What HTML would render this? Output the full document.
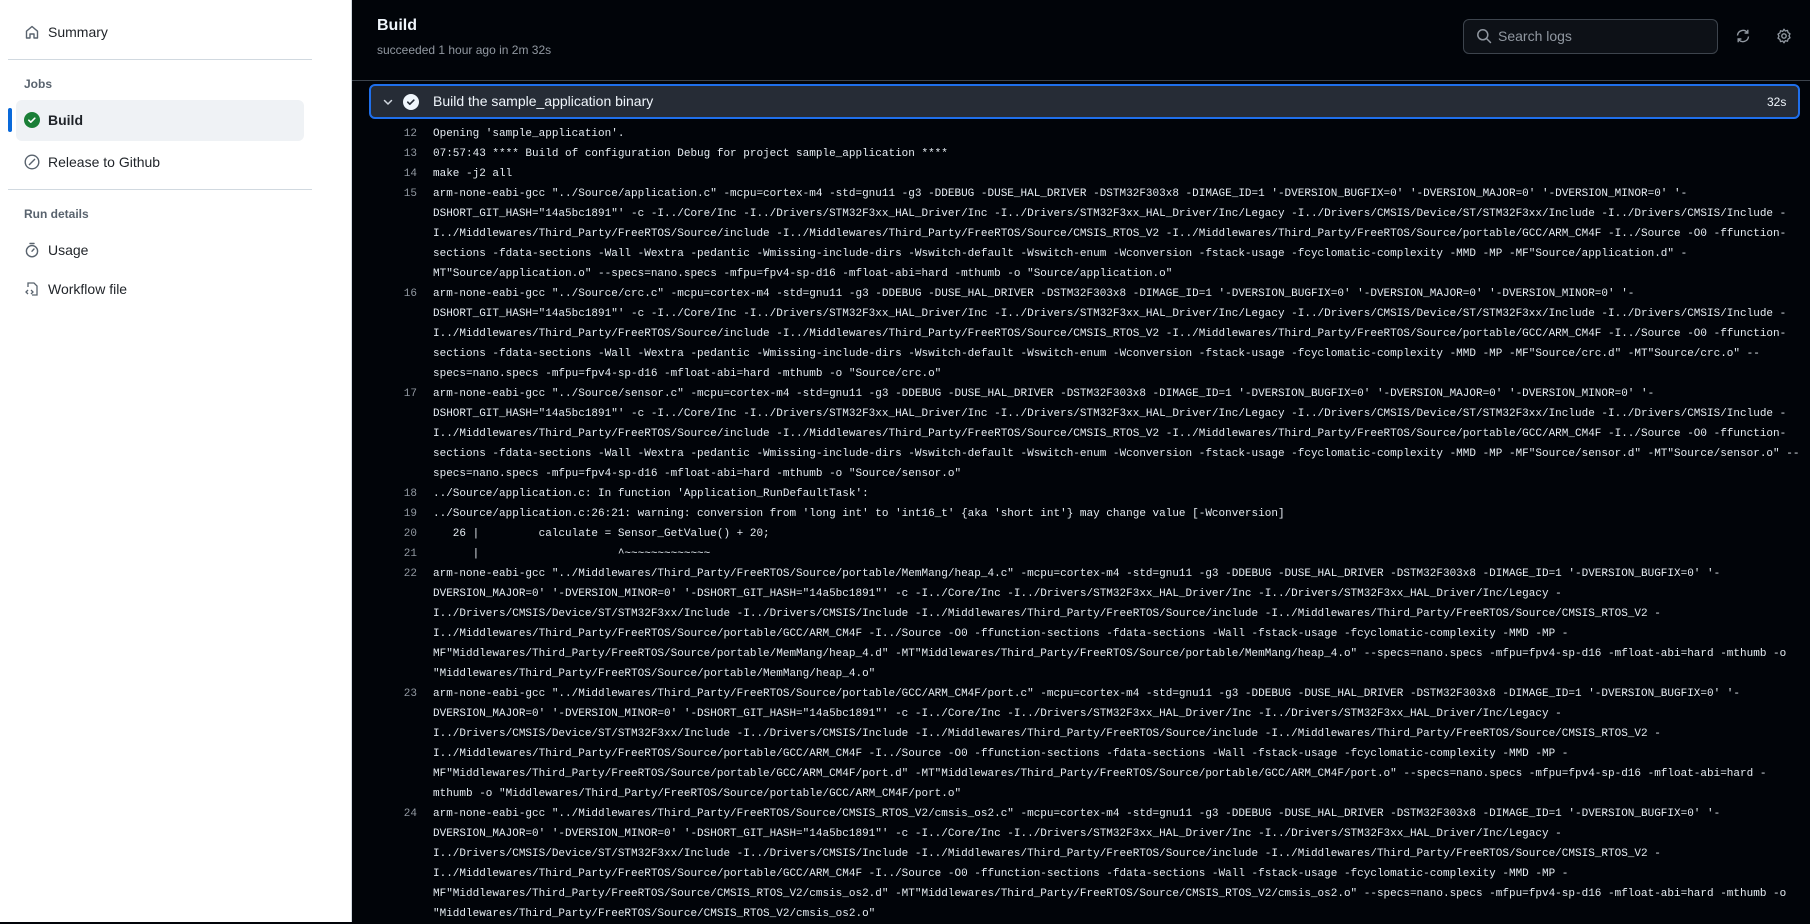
<!DOCTYPE html>
<html><head><meta charset="utf-8"><style>
*{box-sizing:border-box;margin:0;padding:0}
html,body{width:1810px;height:922px;overflow:hidden;background:#010409;font-family:"Liberation Sans",sans-serif}
#side{position:absolute;left:0;top:0;width:352px;height:922px;background:#fff;border-right:1px solid #d1d9e0}
.it{position:absolute;left:48px;font-size:14px;color:#1f2328;line-height:20px}
.ic{position:absolute;left:24px}
.sep{position:absolute;left:8px;width:304px;height:1px;background:#d1d9e0}
.hd{position:absolute;left:24px;font-size:12px;color:#59636e;font-weight:bold}
#main{position:absolute;left:352px;top:0;right:0;bottom:0}
.log{position:absolute;left:0;top:124px;width:1458px;font-family:"Liberation Mono",monospace;font-size:11px;line-height:20px;color:#e6edf3}
.r{white-space:pre;height:20px;position:relative;padding-left:81px}
.n{position:absolute;left:25px;width:40px;text-align:right;color:#9198a1}
</style></head><body>
<div id="side">
 <svg class="ic" style="top:24px" width="16" height="16" viewBox="0 0 16 16"><path d="M2.5 7.2 8 2.5l5.5 4.7V14H10V10H6v4H2.5z" fill="none" stroke="#59636e" stroke-width="1.4" stroke-linejoin="round"/></svg>
 <div class="it" style="top:22px">Summary</div>
 <div class="sep" style="top:59px"></div>
 <div class="hd" style="top:77px">Jobs</div>
 <div style="position:absolute;left:16px;top:100px;width:288px;height:41px;background:#eff2f5;border-radius:6px"></div>
 <div style="position:absolute;left:8px;top:108px;width:4px;height:24px;background:#0969da;border-radius:2px"></div>
 <svg class="ic" style="top:112px" width="16" height="16" viewBox="0 0 16 16"><circle cx="8" cy="8" r="8" fill="#1a7f37"/><path d="M4.8 8.2l2 2 4-4" fill="none" stroke="#fff" stroke-width="1.6" stroke-linecap="round" stroke-linejoin="round"/></svg>
 <div class="it" style="top:110px;font-weight:bold">Build</div>
 <svg class="ic" style="top:154px" width="16" height="16" viewBox="0 0 16 16"><circle cx="8" cy="8" r="6.8" fill="none" stroke="#59636e" stroke-width="1.4"/><path d="M5 11l6-6" stroke="#59636e" stroke-width="1.4"/></svg>
 <div class="it" style="top:152px">Release to Github</div>
 <div class="sep" style="top:189px"></div>
 <div class="hd" style="top:207px">Run details</div>
 <svg class="ic" style="top:242px" width="16" height="16" viewBox="0 0 16 16"><circle cx="8" cy="9.2" r="5.6" fill="none" stroke="#59636e" stroke-width="1.4"/><path d="M6 1.5h4M8 9.2 10 7" stroke="#59636e" stroke-width="1.4" stroke-linecap="round"/></svg>
 <div class="it" style="top:240px">Usage</div>
 <svg class="ic" style="top:281px" width="16" height="16" viewBox="0 0 16 16"><path d="M4 6V2h6l3 3v9H8" fill="none" stroke="#59636e" stroke-width="1.3"/><path d="M4 9l-2 2 2 2M7 9l2 2-2 2" fill="none" stroke="#59636e" stroke-width="1.3"/></svg>
 <div class="it" style="top:279px">Workflow file</div>
</div>
<div id="main">
 <div style="position:absolute;left:25px;top:17px;color:#f0f6fc;font-size:16px;font-weight:bold">Build</div>
 <div style="position:absolute;left:25px;top:43px;color:#9198a1;font-size:12px">succeeded 1 hour ago in 2m 32s</div>
 <div style="position:absolute;left:1111px;top:19px;width:255px;height:35px;border:1px solid #3d444d;border-radius:6px;background:#0d1117"></div>
 <svg style="position:absolute;left:1124px;top:28px" width="16" height="16" viewBox="0 0 16 16"><circle cx="6.8" cy="6.8" r="5" fill="none" stroke="#9198a1" stroke-width="1.5"/><path d="M10.5 10.5 14.5 14.5" stroke="#9198a1" stroke-width="1.5" stroke-linecap="round"/></svg>
 <div style="position:absolute;left:1146px;top:28px;color:#9198a1;font-size:14px">Search logs</div>
 <svg style="position:absolute;left:1383px;top:28px" width="16" height="16" viewBox="0 0 16 16"><path d="M2.5 7.5A5.5 5.5 0 0 1 12.3 4.5M13.5 8.5A5.5 5.5 0 0 1 3.7 11.5" fill="none" stroke="#9198a1" stroke-width="1.4"/><path d="M12.8 1.8v3.2H9.6M3.2 14.2V11h3.2" fill="none" stroke="#9198a1" stroke-width="1.4"/></svg>
 <svg style="position:absolute;left:1424px;top:28px" width="16" height="16" viewBox="0 0 16 16"><circle cx="8" cy="8" r="2.2" fill="none" stroke="#9198a1" stroke-width="1.4"/><path d="M8 1.2l1.3 1.8 2.2-.6.6 2.2 1.9 1.2-1 2 1 2-1.9 1.2-.6 2.2-2.2-.6L8 14.8l-1.3-1.8-2.2.6-.6-2.2L2 10.2l1-2-1-2 1.9-1.2.6-2.2 2.2.6z" fill="none" stroke="#9198a1" stroke-width="1.3" stroke-linejoin="round"/></svg>
 <div style="position:absolute;left:0;right:0;top:80px;height:1px;background:#3d444d"></div>
 <div style="position:absolute;left:17px;top:84px;width:1431px;height:35px;background:#262c36;border:2px solid #1f6feb;border-radius:6px"></div>
 <svg style="position:absolute;left:28px;top:94px" width="16" height="16" viewBox="0 0 16 16"><path d="M4.5 6.5 8 10l3.5-3.5" fill="none" stroke="#d1d7e0" stroke-width="1.5" stroke-linecap="round"/></svg>
 <svg style="position:absolute;left:51px;top:94px" width="16" height="16" viewBox="0 0 16 16"><circle cx="8" cy="8" r="8" fill="#f0f6fc"/><path d="M4.8 8.2l2 2 4-4" fill="none" stroke="#262c36" stroke-width="1.7" stroke-linecap="round" stroke-linejoin="round"/></svg>
 <div style="position:absolute;left:81px;top:93px;color:#f0f6fc;font-size:14px">Build the sample_application binary</div>
 <div style="position:absolute;left:1415px;top:95px;color:#f0f6fc;font-size:12px">32s</div>
 <div class="log">
<div class="r"><span class="n">12</span>Opening 'sample_application'.</div>
<div class="r"><span class="n">13</span>07:57:43 **** Build of configuration Debug for project sample_application ****</div>
<div class="r"><span class="n">14</span>make -j2 all</div>
<div class="r"><span class="n">15</span>arm-none-eabi-gcc "../Source/application.c" -mcpu=cortex-m4 -std=gnu11 -g3 -DDEBUG -DUSE_HAL_DRIVER -DSTM32F303x8 -DIMAGE_ID=1 '-DVERSION_BUGFIX=0' '-DVERSION_MAJOR=0' '-DVERSION_MINOR=0' '-</div>
<div class="r">DSHORT_GIT_HASH="14a5bc1891"' -c -I../Core/Inc -I../Drivers/STM32F3xx_HAL_Driver/Inc -I../Drivers/STM32F3xx_HAL_Driver/Inc/Legacy -I../Drivers/CMSIS/Device/ST/STM32F3xx/Include -I../Drivers/CMSIS/Include -</div>
<div class="r">I../Middlewares/Third_Party/FreeRTOS/Source/include -I../Middlewares/Third_Party/FreeRTOS/Source/CMSIS_RTOS_V2 -I../Middlewares/Third_Party/FreeRTOS/Source/portable/GCC/ARM_CM4F -I../Source -O0 -ffunction-</div>
<div class="r">sections -fdata-sections -Wall -Wextra -pedantic -Wmissing-include-dirs -Wswitch-default -Wswitch-enum -Wconversion -fstack-usage -fcyclomatic-complexity -MMD -MP -MF"Source/application.d" -</div>
<div class="r">MT"Source/application.o" --specs=nano.specs -mfpu=fpv4-sp-d16 -mfloat-abi=hard -mthumb -o "Source/application.o"</div>
<div class="r"><span class="n">16</span>arm-none-eabi-gcc "../Source/crc.c" -mcpu=cortex-m4 -std=gnu11 -g3 -DDEBUG -DUSE_HAL_DRIVER -DSTM32F303x8 -DIMAGE_ID=1 '-DVERSION_BUGFIX=0' '-DVERSION_MAJOR=0' '-DVERSION_MINOR=0' '-</div>
<div class="r">DSHORT_GIT_HASH="14a5bc1891"' -c -I../Core/Inc -I../Drivers/STM32F3xx_HAL_Driver/Inc -I../Drivers/STM32F3xx_HAL_Driver/Inc/Legacy -I../Drivers/CMSIS/Device/ST/STM32F3xx/Include -I../Drivers/CMSIS/Include -</div>
<div class="r">I../Middlewares/Third_Party/FreeRTOS/Source/include -I../Middlewares/Third_Party/FreeRTOS/Source/CMSIS_RTOS_V2 -I../Middlewares/Third_Party/FreeRTOS/Source/portable/GCC/ARM_CM4F -I../Source -O0 -ffunction-</div>
<div class="r">sections -fdata-sections -Wall -Wextra -pedantic -Wmissing-include-dirs -Wswitch-default -Wswitch-enum -Wconversion -fstack-usage -fcyclomatic-complexity -MMD -MP -MF"Source/crc.d" -MT"Source/crc.o" --</div>
<div class="r">specs=nano.specs -mfpu=fpv4-sp-d16 -mfloat-abi=hard -mthumb -o "Source/crc.o"</div>
<div class="r"><span class="n">17</span>arm-none-eabi-gcc "../Source/sensor.c" -mcpu=cortex-m4 -std=gnu11 -g3 -DDEBUG -DUSE_HAL_DRIVER -DSTM32F303x8 -DIMAGE_ID=1 '-DVERSION_BUGFIX=0' '-DVERSION_MAJOR=0' '-DVERSION_MINOR=0' '-</div>
<div class="r">DSHORT_GIT_HASH="14a5bc1891"' -c -I../Core/Inc -I../Drivers/STM32F3xx_HAL_Driver/Inc -I../Drivers/STM32F3xx_HAL_Driver/Inc/Legacy -I../Drivers/CMSIS/Device/ST/STM32F3xx/Include -I../Drivers/CMSIS/Include -</div>
<div class="r">I../Middlewares/Third_Party/FreeRTOS/Source/include -I../Middlewares/Third_Party/FreeRTOS/Source/CMSIS_RTOS_V2 -I../Middlewares/Third_Party/FreeRTOS/Source/portable/GCC/ARM_CM4F -I../Source -O0 -ffunction-</div>
<div class="r">sections -fdata-sections -Wall -Wextra -pedantic -Wmissing-include-dirs -Wswitch-default -Wswitch-enum -Wconversion -fstack-usage -fcyclomatic-complexity -MMD -MP -MF"Source/sensor.d" -MT"Source/sensor.o" --</div>
<div class="r">specs=nano.specs -mfpu=fpv4-sp-d16 -mfloat-abi=hard -mthumb -o "Source/sensor.o"</div>
<div class="r"><span class="n">18</span>../Source/application.c: In function 'Application_RunDefaultTask':</div>
<div class="r"><span class="n">19</span>../Source/application.c:26:21: warning: conversion from 'long int' to 'int16_t' {aka 'short int'} may change value [-Wconversion]</div>
<div class="r"><span class="n">20</span>   26 |         calculate = Sensor_GetValue() + 20;</div>
<div class="r"><span class="n">21</span>      |                     ^~~~~~~~~~~~~~</div>
<div class="r"><span class="n">22</span>arm-none-eabi-gcc "../Middlewares/Third_Party/FreeRTOS/Source/portable/MemMang/heap_4.c" -mcpu=cortex-m4 -std=gnu11 -g3 -DDEBUG -DUSE_HAL_DRIVER -DSTM32F303x8 -DIMAGE_ID=1 '-DVERSION_BUGFIX=0' '-</div>
<div class="r">DVERSION_MAJOR=0' '-DVERSION_MINOR=0' '-DSHORT_GIT_HASH="14a5bc1891"' -c -I../Core/Inc -I../Drivers/STM32F3xx_HAL_Driver/Inc -I../Drivers/STM32F3xx_HAL_Driver/Inc/Legacy -</div>
<div class="r">I../Drivers/CMSIS/Device/ST/STM32F3xx/Include -I../Drivers/CMSIS/Include -I../Middlewares/Third_Party/FreeRTOS/Source/include -I../Middlewares/Third_Party/FreeRTOS/Source/CMSIS_RTOS_V2 -</div>
<div class="r">I../Middlewares/Third_Party/FreeRTOS/Source/portable/GCC/ARM_CM4F -I../Source -O0 -ffunction-sections -fdata-sections -Wall -fstack-usage -fcyclomatic-complexity -MMD -MP -</div>
<div class="r">MF"Middlewares/Third_Party/FreeRTOS/Source/portable/MemMang/heap_4.d" -MT"Middlewares/Third_Party/FreeRTOS/Source/portable/MemMang/heap_4.o" --specs=nano.specs -mfpu=fpv4-sp-d16 -mfloat-abi=hard -mthumb -o</div>
<div class="r">"Middlewares/Third_Party/FreeRTOS/Source/portable/MemMang/heap_4.o"</div>
<div class="r"><span class="n">23</span>arm-none-eabi-gcc "../Middlewares/Third_Party/FreeRTOS/Source/portable/GCC/ARM_CM4F/port.c" -mcpu=cortex-m4 -std=gnu11 -g3 -DDEBUG -DUSE_HAL_DRIVER -DSTM32F303x8 -DIMAGE_ID=1 '-DVERSION_BUGFIX=0' '-</div>
<div class="r">DVERSION_MAJOR=0' '-DVERSION_MINOR=0' '-DSHORT_GIT_HASH="14a5bc1891"' -c -I../Core/Inc -I../Drivers/STM32F3xx_HAL_Driver/Inc -I../Drivers/STM32F3xx_HAL_Driver/Inc/Legacy -</div>
<div class="r">I../Drivers/CMSIS/Device/ST/STM32F3xx/Include -I../Drivers/CMSIS/Include -I../Middlewares/Third_Party/FreeRTOS/Source/include -I../Middlewares/Third_Party/FreeRTOS/Source/CMSIS_RTOS_V2 -</div>
<div class="r">I../Middlewares/Third_Party/FreeRTOS/Source/portable/GCC/ARM_CM4F -I../Source -O0 -ffunction-sections -fdata-sections -Wall -fstack-usage -fcyclomatic-complexity -MMD -MP -</div>
<div class="r">MF"Middlewares/Third_Party/FreeRTOS/Source/portable/GCC/ARM_CM4F/port.d" -MT"Middlewares/Third_Party/FreeRTOS/Source/portable/GCC/ARM_CM4F/port.o" --specs=nano.specs -mfpu=fpv4-sp-d16 -mfloat-abi=hard -</div>
<div class="r">mthumb -o "Middlewares/Third_Party/FreeRTOS/Source/portable/GCC/ARM_CM4F/port.o"</div>
<div class="r"><span class="n">24</span>arm-none-eabi-gcc "../Middlewares/Third_Party/FreeRTOS/Source/CMSIS_RTOS_V2/cmsis_os2.c" -mcpu=cortex-m4 -std=gnu11 -g3 -DDEBUG -DUSE_HAL_DRIVER -DSTM32F303x8 -DIMAGE_ID=1 '-DVERSION_BUGFIX=0' '-</div>
<div class="r">DVERSION_MAJOR=0' '-DVERSION_MINOR=0' '-DSHORT_GIT_HASH="14a5bc1891"' -c -I../Core/Inc -I../Drivers/STM32F3xx_HAL_Driver/Inc -I../Drivers/STM32F3xx_HAL_Driver/Inc/Legacy -</div>
<div class="r">I../Drivers/CMSIS/Device/ST/STM32F3xx/Include -I../Drivers/CMSIS/Include -I../Middlewares/Third_Party/FreeRTOS/Source/include -I../Middlewares/Third_Party/FreeRTOS/Source/CMSIS_RTOS_V2 -</div>
<div class="r">I../Middlewares/Third_Party/FreeRTOS/Source/portable/GCC/ARM_CM4F -I../Source -O0 -ffunction-sections -fdata-sections -Wall -fstack-usage -fcyclomatic-complexity -MMD -MP -</div>
<div class="r">MF"Middlewares/Third_Party/FreeRTOS/Source/CMSIS_RTOS_V2/cmsis_os2.d" -MT"Middlewares/Third_Party/FreeRTOS/Source/CMSIS_RTOS_V2/cmsis_os2.o" --specs=nano.specs -mfpu=fpv4-sp-d16 -mfloat-abi=hard -mthumb -o</div>
<div class="r">"Middlewares/Third_Party/FreeRTOS/Source/CMSIS_RTOS_V2/cmsis_os2.o"</div>
 </div>
</div>
</body></html>
